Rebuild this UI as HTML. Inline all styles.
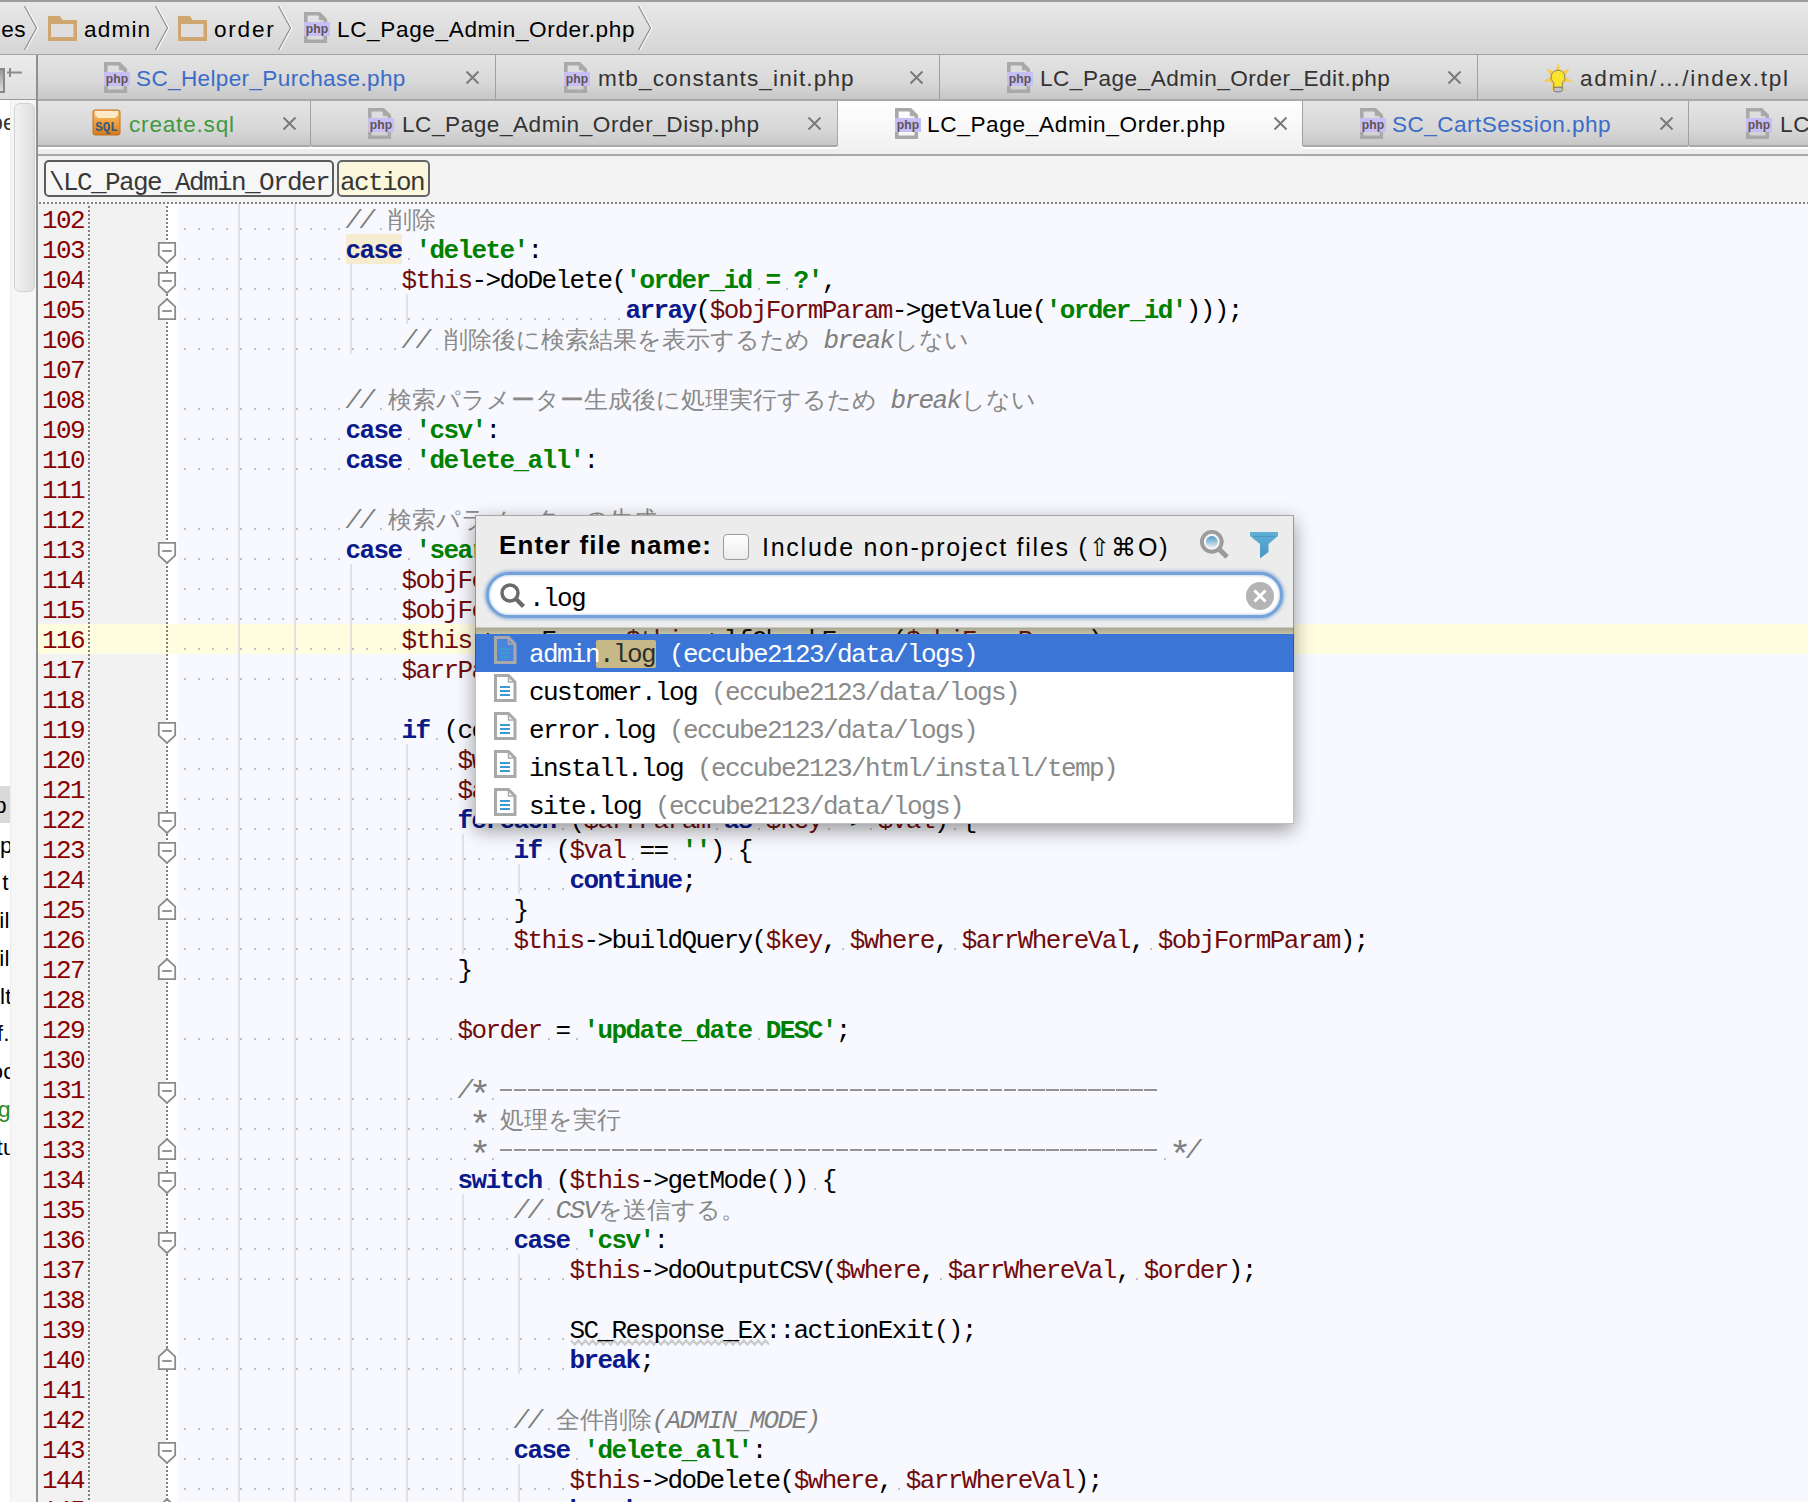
<!DOCTYPE html><html><head><meta charset="utf-8"><title>IDE</title><style>
html,body{margin:0;padding:0}
body{width:1808px;height:1502px;position:relative;overflow:hidden;background:#f8f9fe;font-family:"Liberation Sans",sans-serif}
.a{position:absolute}
.mono{font-family:"Liberation Mono",monospace}
.ln{position:absolute;left:0;height:30px;line-height:30px;margin-top:2px;white-space:pre;font-family:"Liberation Mono",monospace;font-size:26px;letter-spacing:-1.6px;color:#000}
.k{color:#0a1a8a;font-weight:bold}
.st{color:#008000;font-weight:bold}
.v{color:#720c0c}
.cm{color:#808080;font-style:italic}
.dash{color:transparent;background:repeating-linear-gradient(90deg,#939393 0 12.5px,transparent 12.5px 14px) 0 12.8px/100% 2.2px no-repeat}
.ast{display:inline-block;transform:translate(0px,6px) scale(1.45);font-style:normal}
.cj{color:#8a8a8a;font-size:23.5px;letter-spacing:0}
.num{position:absolute;left:42px;height:30px;line-height:30px;margin-top:2px;font-family:"Liberation Mono",monospace;font-size:26px;letter-spacing:-1.6px;color:#8b0000}
.ws{position:absolute;height:30px;background:linear-gradient(90deg,transparent 6px,#c2c2c2 6px,#c2c2c2 8px,transparent 8px) 0 24px/14px 2px repeat-x}
.guide{position:absolute;width:2px;background:#e2e2e2}
.tabtxt{position:absolute;font-size:22.6px;letter-spacing:0.35px;white-space:pre;margin-top:3.5px}
.tab{position:absolute;background:linear-gradient(#e6e6e6,#cdcdcd)}
</style></head><body>
<div class="a" style="left:37px;top:204px;width:129px;height:1298px;background:#f2f2f2"></div>
<div class="a" style="left:166px;top:204px;width:12px;height:1298px;background:#fff"></div>
<div class="a" style="left:37px;top:624px;width:1771px;height:30px;background:#fffde0"></div>
<div class="a" style="left:346px;top:234px;width:56px;height:30px;background:#f6ecd0"></div>
<div class="a" style="left:88px;top:204px;width:2px;height:1298px;background:linear-gradient(#808080 50%,transparent 50%) 0 2px/2px 4px repeat-y"></div>
<div class="a" style="left:166px;top:204px;width:2px;height:1298px;background:linear-gradient(#808080 50%,transparent 50%) 0 2px/2px 4px repeat-y"></div>
<div class="guide" style="left:238px;top:204px;height:1320px"></div>
<div class="guide" style="left:294px;top:204px;height:1320px"></div>
<div class="guide" style="left:350px;top:264px;height:90px"></div>
<div class="guide" style="left:350px;top:564px;height:960px"></div>
<div class="guide" style="left:406px;top:294px;height:30px"></div>
<div class="guide" style="left:406px;top:744px;height:780px"></div>
<div class="guide" style="left:462px;top:834px;height:120px"></div>
<div class="guide" style="left:462px;top:1194px;height:330px"></div>
<div class="guide" style="left:518px;top:864px;height:30px"></div>
<div class="guide" style="left:518px;top:1254px;height:120px"></div>
<div class="guide" style="left:518px;top:1464px;height:60px"></div>
<svg class="a" style="left:0;top:0" width="1808" height="1502"><polyline points="571.0,1340.5 574.6,1344.5 578.2,1340.5 581.8,1344.5 585.4,1340.5 589.0,1344.5 592.6,1340.5 596.2,1344.5 599.8,1340.5 603.4,1344.5 607.0,1340.5 610.6,1344.5 614.2,1340.5 617.8,1344.5 621.4,1340.5 625.0,1344.5 628.6,1340.5 632.2,1344.5 635.8,1340.5 639.4,1344.5 643.0,1340.5 646.6,1344.5 650.2,1340.5 653.8,1344.5 657.4,1340.5 661.0,1344.5 664.6,1340.5 668.2,1344.5 671.8,1340.5 675.4,1344.5 679.0,1340.5 682.6,1344.5 686.2,1340.5 689.8,1344.5 693.4,1340.5 697.0,1344.5 700.6,1340.5 704.2,1344.5 707.8,1340.5 711.4,1344.5 715.0,1340.5 718.6,1344.5 722.2,1340.5 725.8,1344.5 729.4,1340.5 733.0,1344.5 736.6,1340.5 740.2,1344.5 743.8,1340.5 747.4,1344.5 751.0,1340.5 754.6,1344.5 758.2,1340.5 761.8,1344.5 765.4,1340.5 769.0,1344.5" fill="none" stroke="#cacaca" stroke-width="2.2"/></svg>
<div class="num" style="top:204px">102</div>
<div class="ws" style="left:177.5px;top:204px;width:168px"></div>
<div class="ws" style="left:373.5px;top:204px;width:14px"></div>
<div class="ln" style="left:177.5px;top:204px">            <span class="cm">// </span><span class="cj">削除</span></div>
<div class="num" style="top:234px">103</div>
<div class="ws" style="left:177.5px;top:234px;width:168px"></div>
<div class="ws" style="left:401.5px;top:234px;width:14px"></div>
<div class="ln" style="left:177.5px;top:234px">            <span class="k">case</span> <span class="st">'delete'</span>:</div>
<div class="num" style="top:264px">104</div>
<div class="ws" style="left:177.5px;top:264px;width:224px"></div>
<div class="ws" style="left:751.5px;top:264px;width:14px"></div>
<div class="ws" style="left:779.5px;top:264px;width:14px"></div>
<div class="ln" style="left:177.5px;top:264px">                <span class="v">$this</span>-&gt;doDelete(<span class="st">'order_id = ?'</span>,</div>
<div class="num" style="top:294px">105</div>
<div class="ws" style="left:177.5px;top:294px;width:448px"></div>
<div class="ln" style="left:177.5px;top:294px">                                <span class="k">array</span>(<span class="v">$objFormParam</span>-&gt;getValue(<span class="st">'order_id'</span>)));</div>
<div class="num" style="top:324px">106</div>
<div class="ws" style="left:177.5px;top:324px;width:224px"></div>
<div class="ws" style="left:429.5px;top:324px;width:14px"></div>
<div class="ln" style="left:177.5px;top:324px">                <span class="cm">// </span><span class="cj">削除後に検索結果を表示するため</span><span class="cm"> break</span><span class="cj">しない</span></div>
<div class="num" style="top:354px">107</div>
<div class="num" style="top:384px">108</div>
<div class="ws" style="left:177.5px;top:384px;width:168px"></div>
<div class="ws" style="left:373.5px;top:384px;width:14px"></div>
<div class="ln" style="left:177.5px;top:384px">            <span class="cm">// </span><span class="cj">検索パラメーター生成後に処理実行するため</span><span class="cm"> break</span><span class="cj">しない</span></div>
<div class="num" style="top:414px">109</div>
<div class="ws" style="left:177.5px;top:414px;width:168px"></div>
<div class="ws" style="left:401.5px;top:414px;width:14px"></div>
<div class="ln" style="left:177.5px;top:414px">            <span class="k">case</span> <span class="st">'csv'</span>:</div>
<div class="num" style="top:444px">110</div>
<div class="ws" style="left:177.5px;top:444px;width:168px"></div>
<div class="ws" style="left:401.5px;top:444px;width:14px"></div>
<div class="ln" style="left:177.5px;top:444px">            <span class="k">case</span> <span class="st">'delete_all'</span>:</div>
<div class="num" style="top:474px">111</div>
<div class="num" style="top:504px">112</div>
<div class="ws" style="left:177.5px;top:504px;width:168px"></div>
<div class="ws" style="left:373.5px;top:504px;width:14px"></div>
<div class="ln" style="left:177.5px;top:504px">            <span class="cm">// </span><span class="cj">検索パラメーターの生成</span></div>
<div class="num" style="top:534px">113</div>
<div class="ws" style="left:177.5px;top:534px;width:168px"></div>
<div class="ws" style="left:401.5px;top:534px;width:14px"></div>
<div class="ln" style="left:177.5px;top:534px">            <span class="k">case</span> <span class="st">'search'</span>:</div>
<div class="num" style="top:564px">114</div>
<div class="ws" style="left:177.5px;top:564px;width:224px"></div>
<div class="ln" style="left:177.5px;top:564px">                <span class="v">$objFormParam</span>-&gt;convParam();</div>
<div class="num" style="top:594px">115</div>
<div class="ws" style="left:177.5px;top:594px;width:224px"></div>
<div class="ln" style="left:177.5px;top:594px">                <span class="v">$objFormParam</span>-&gt;trimParam();</div>
<div class="num" style="top:624px">116</div>
<div class="ws" style="left:177.5px;top:624px;width:224px"></div>
<div class="ws" style="left:583.5px;top:624px;width:14px"></div>
<div class="ws" style="left:611.5px;top:624px;width:14px"></div>
<div class="ln" style="left:177.5px;top:624px">                <span class="v">$this</span>-&gt;arrErr = <span class="v">$this</span>-&gt;lfCheckError(<span class="v">$objFormParam</span>);</div>
<div class="num" style="top:654px">117</div>
<div class="ws" style="left:177.5px;top:654px;width:224px"></div>
<div class="ws" style="left:527.5px;top:654px;width:14px"></div>
<div class="ws" style="left:555.5px;top:654px;width:14px"></div>
<div class="ln" style="left:177.5px;top:654px">                <span class="v">$arrParam</span> = <span class="v">$objFormParam</span>-&gt;getHashArray();</div>
<div class="num" style="top:684px">118</div>
<div class="num" style="top:714px">119</div>
<div class="ws" style="left:177.5px;top:714px;width:224px"></div>
<div class="ws" style="left:429.5px;top:714px;width:14px"></div>
<div class="ws" style="left:737.5px;top:714px;width:14px"></div>
<div class="ws" style="left:779.5px;top:714px;width:14px"></div>
<div class="ws" style="left:821.5px;top:714px;width:14px"></div>
<div class="ln" style="left:177.5px;top:714px">                <span class="k">if</span> (count(<span class="v">$this</span>-&gt;arrErr) == 0) {</div>
<div class="num" style="top:744px">120</div>
<div class="ws" style="left:177.5px;top:744px;width:280px"></div>
<div class="ws" style="left:541.5px;top:744px;width:14px"></div>
<div class="ws" style="left:569.5px;top:744px;width:14px"></div>
<div class="ws" style="left:695.5px;top:744px;width:14px"></div>
<div class="ws" style="left:723.5px;top:744px;width:14px"></div>
<div class="ln" style="left:177.5px;top:744px">                    <span class="v">$where</span> = <span class="st">'del_flg = 0'</span>;</div>
<div class="num" style="top:774px">121</div>
<div class="ws" style="left:177.5px;top:774px;width:280px"></div>
<div class="ws" style="left:625.5px;top:774px;width:14px"></div>
<div class="ws" style="left:653.5px;top:774px;width:14px"></div>
<div class="ln" style="left:177.5px;top:774px">                    <span class="v">$arrWhereVal</span> = <span class="k">array</span>();</div>
<div class="num" style="top:804px">122</div>
<div class="ws" style="left:177.5px;top:804px;width:280px"></div>
<div class="ws" style="left:555.5px;top:804px;width:14px"></div>
<div class="ws" style="left:709.5px;top:804px;width:14px"></div>
<div class="ws" style="left:751.5px;top:804px;width:14px"></div>
<div class="ws" style="left:821.5px;top:804px;width:14px"></div>
<div class="ws" style="left:863.5px;top:804px;width:14px"></div>
<div class="ws" style="left:947.5px;top:804px;width:14px"></div>
<div class="ln" style="left:177.5px;top:804px">                    <span class="k">foreach</span> (<span class="v">$arrParam</span> <span class="k">as</span> <span class="v">$key</span> =&gt; <span class="v">$val</span>) {</div>
<div class="num" style="top:834px">123</div>
<div class="ws" style="left:177.5px;top:834px;width:336px"></div>
<div class="ws" style="left:541.5px;top:834px;width:14px"></div>
<div class="ws" style="left:625.5px;top:834px;width:14px"></div>
<div class="ws" style="left:667.5px;top:834px;width:14px"></div>
<div class="ws" style="left:723.5px;top:834px;width:14px"></div>
<div class="ln" style="left:177.5px;top:834px">                        <span class="k">if</span> (<span class="v">$val</span> == <span class="st">''</span>) {</div>
<div class="num" style="top:864px">124</div>
<div class="ws" style="left:177.5px;top:864px;width:392px"></div>
<div class="ln" style="left:177.5px;top:864px">                            <span class="k">continue</span>;</div>
<div class="num" style="top:894px">125</div>
<div class="ws" style="left:177.5px;top:894px;width:336px"></div>
<div class="ln" style="left:177.5px;top:894px">                        }</div>
<div class="num" style="top:924px">126</div>
<div class="ws" style="left:177.5px;top:924px;width:336px"></div>
<div class="ws" style="left:835.5px;top:924px;width:14px"></div>
<div class="ws" style="left:947.5px;top:924px;width:14px"></div>
<div class="ws" style="left:1143.5px;top:924px;width:14px"></div>
<div class="ln" style="left:177.5px;top:924px">                        <span class="v">$this</span>-&gt;buildQuery(<span class="v">$key</span>, <span class="v">$where</span>, <span class="v">$arrWhereVal</span>, <span class="v">$objFormParam</span>);</div>
<div class="num" style="top:954px">127</div>
<div class="ws" style="left:177.5px;top:954px;width:280px"></div>
<div class="ln" style="left:177.5px;top:954px">                    }</div>
<div class="num" style="top:984px">128</div>
<div class="num" style="top:1014px">129</div>
<div class="ws" style="left:177.5px;top:1014px;width:280px"></div>
<div class="ws" style="left:541.5px;top:1014px;width:14px"></div>
<div class="ws" style="left:569.5px;top:1014px;width:14px"></div>
<div class="ws" style="left:751.5px;top:1014px;width:14px"></div>
<div class="ln" style="left:177.5px;top:1014px">                    <span class="v">$order</span> = <span class="st">'update_date DESC'</span>;</div>
<div class="num" style="top:1044px">130</div>
<div class="num" style="top:1074px">131</div>
<div class="ws" style="left:177.5px;top:1074px;width:280px"></div>
<div class="ws" style="left:485.5px;top:1074px;width:14px"></div>
<div class="ln" style="left:177.5px;top:1074px">                    <span class="cm">/<span class="ast">*</span> <span class="dash">-----------------------------------------------</span></span></div>
<div class="num" style="top:1104px">132</div>
<div class="ws" style="left:177.5px;top:1104px;width:294px"></div>
<div class="ws" style="left:485.5px;top:1104px;width:14px"></div>
<div class="ln" style="left:177.5px;top:1104px">                    <span class="cm"> <span class="ast">*</span> </span><span class="cj">処理を実行</span></div>
<div class="num" style="top:1134px">133</div>
<div class="ws" style="left:177.5px;top:1134px;width:294px"></div>
<div class="ws" style="left:485.5px;top:1134px;width:14px"></div>
<div class="ws" style="left:1157.5px;top:1134px;width:14px"></div>
<div class="ln" style="left:177.5px;top:1134px">                    <span class="cm"> <span class="ast">*</span> <span class="dash">-----------------------------------------------</span> <span class="ast">*</span>/</span></div>
<div class="num" style="top:1164px">134</div>
<div class="ws" style="left:177.5px;top:1164px;width:280px"></div>
<div class="ws" style="left:541.5px;top:1164px;width:14px"></div>
<div class="ws" style="left:807.5px;top:1164px;width:14px"></div>
<div class="ln" style="left:177.5px;top:1164px">                    <span class="k">switch</span> (<span class="v">$this</span>-&gt;getMode()) {</div>
<div class="num" style="top:1194px">135</div>
<div class="ws" style="left:177.5px;top:1194px;width:336px"></div>
<div class="ws" style="left:541.5px;top:1194px;width:14px"></div>
<div class="ln" style="left:177.5px;top:1194px">                        <span class="cm">// CSV</span><span class="cj">を送信する。</span></div>
<div class="num" style="top:1224px">136</div>
<div class="ws" style="left:177.5px;top:1224px;width:336px"></div>
<div class="ws" style="left:569.5px;top:1224px;width:14px"></div>
<div class="ln" style="left:177.5px;top:1224px">                        <span class="k">case</span> <span class="st">'csv'</span>:</div>
<div class="num" style="top:1254px">137</div>
<div class="ws" style="left:177.5px;top:1254px;width:392px"></div>
<div class="ws" style="left:933.5px;top:1254px;width:14px"></div>
<div class="ws" style="left:1129.5px;top:1254px;width:14px"></div>
<div class="ln" style="left:177.5px;top:1254px">                            <span class="v">$this</span>-&gt;doOutputCSV(<span class="v">$where</span>, <span class="v">$arrWhereVal</span>, <span class="v">$order</span>);</div>
<div class="num" style="top:1284px">138</div>
<div class="num" style="top:1314px">139</div>
<div class="ws" style="left:177.5px;top:1314px;width:392px"></div>
<div class="ln" style="left:177.5px;top:1314px">                            SC_Response_Ex::actionExit();</div>
<div class="num" style="top:1344px">140</div>
<div class="ws" style="left:177.5px;top:1344px;width:392px"></div>
<div class="ln" style="left:177.5px;top:1344px">                            <span class="k">break</span>;</div>
<div class="num" style="top:1374px">141</div>
<div class="num" style="top:1404px">142</div>
<div class="ws" style="left:177.5px;top:1404px;width:336px"></div>
<div class="ws" style="left:541.5px;top:1404px;width:14px"></div>
<div class="ln" style="left:177.5px;top:1404px">                        <span class="cm">// </span><span class="cj">全件削除</span><span class="cm">(ADMIN_MODE)</span></div>
<div class="num" style="top:1434px">143</div>
<div class="ws" style="left:177.5px;top:1434px;width:336px"></div>
<div class="ws" style="left:569.5px;top:1434px;width:14px"></div>
<div class="ln" style="left:177.5px;top:1434px">                        <span class="k">case</span> <span class="st">'delete_all'</span>:</div>
<div class="num" style="top:1464px">144</div>
<div class="ws" style="left:177.5px;top:1464px;width:392px"></div>
<div class="ws" style="left:891.5px;top:1464px;width:14px"></div>
<div class="ln" style="left:177.5px;top:1464px">                            <span class="v">$this</span>-&gt;doDelete(<span class="v">$where</span>, <span class="v">$arrWhereVal</span>);</div>
<div class="num" style="top:1494px">145</div>
<div class="ws" style="left:177.5px;top:1494px;width:392px"></div>
<div class="ln" style="left:177.5px;top:1494px">                            <span class="k">break</span>;</div>
<div class="a" style="left:0;top:0;width:1808px;height:54px;background:linear-gradient(#e9e9e9,#d5d5d5)"></div>
<div class="a" style="left:0;top:0;width:1808px;height:2px;background:#9d9d9d"></div>
<div class="a" style="left:0;top:54px;width:1808px;height:1px;background:#a3a3a3"></div>
<div class="a tabtxt" style="left:-16px;top:13px;color:#000">files</div>
<svg class="a" style="left:23px;top:4px" width="16" height="48" viewBox="0 0 16 48"><path d="M1.5 2L13.5 24L1.5 46" fill="none" stroke="#fbfbfb" stroke-width="1.5" transform="translate(1.2,0)"/><path d="M1.5 2L13.5 24L1.5 46" fill="none" stroke="#8f8f8f" stroke-width="1.2"/></svg>
<svg class="a" style="left:48px;top:16px" width="29" height="25" viewBox="0 0 29 25"><path d="M0 0h12l2.5 4h14.5v21h-29z" fill="#cfa670"/><rect x="3" y="8" width="22.5" height="13" fill="#dedede"/></svg>
<div class="a tabtxt" style="left:84px;top:13px;color:#000;letter-spacing:1.15px">admin</div>
<svg class="a" style="left:154px;top:4px" width="16" height="48" viewBox="0 0 16 48"><path d="M1.5 2L13.5 24L1.5 46" fill="none" stroke="#fbfbfb" stroke-width="1.5" transform="translate(1.2,0)"/><path d="M1.5 2L13.5 24L1.5 46" fill="none" stroke="#8f8f8f" stroke-width="1.2"/></svg>
<svg class="a" style="left:178px;top:16px" width="29" height="25" viewBox="0 0 29 25"><path d="M0 0h12l2.5 4h14.5v21h-29z" fill="#cfa670"/><rect x="3" y="8" width="22.5" height="13" fill="#dedede"/></svg>
<div class="a tabtxt" style="left:214px;top:13px;color:#000;letter-spacing:1.75px">order</div>
<svg class="a" style="left:277px;top:4px" width="16" height="48" viewBox="0 0 16 48"><path d="M1.5 2L13.5 24L1.5 46" fill="none" stroke="#fbfbfb" stroke-width="1.5" transform="translate(1.2,0)"/><path d="M1.5 2L13.5 24L1.5 46" fill="none" stroke="#8f8f8f" stroke-width="1.2"/></svg>
<svg class="a" style="left:304px;top:12px" width="27" height="31" viewBox="0 0 27 31"><path d="M1.8 1.8h13.5l6 6v21.5h-19.5z" fill="none" stroke="#a9a9a9" stroke-width="3.6"/><path d="M15.3 1.8v6h6" fill="#a9a9a9" stroke="#a9a9a9" stroke-width="1"/><rect x="0" y="10" width="26" height="14" fill="#c6bef5"/><text x="13" y="21.5" text-anchor="middle" font-family="Liberation Sans" font-weight="bold" font-size="13.5" fill="#5f5454" transform="translate(13 0) scale(0.9 1) translate(-13 0)">php</text></svg>
<div class="a tabtxt" style="left:337px;top:13px;color:#000;letter-spacing:0.62px">LC_Page_Admin_Order.php</div>
<svg class="a" style="left:637px;top:4px" width="16" height="48" viewBox="0 0 16 48"><path d="M1.5 2L13.5 24L1.5 46" fill="none" stroke="#fbfbfb" stroke-width="1.5" transform="translate(1.2,0)"/><path d="M1.5 2L13.5 24L1.5 46" fill="none" stroke="#8f8f8f" stroke-width="1.2"/></svg>
<div class="a" style="left:0;top:55px;width:36px;height:44px;background:linear-gradient(#ececec,#dedede)"></div>
<div class="a" style="left:0;top:99px;width:36px;height:1px;background:#9a9a9a"></div>
<div class="a" style="left:-6px;top:68px;width:7px;height:21px;border:2px solid #888;background:linear-gradient(#999,#ddd)"></div>
<svg class="a" style="left:5px;top:67px" width="18" height="14" viewBox="0 0 18 14"><path d="M2 5.5h15M5 1v9" stroke="#8a8a8a" stroke-width="2"/></svg>
<div class="a" style="left:37px;top:55px;width:1771px;height:46px;background:#c8c8c8"></div>
<div class="a" style="left:37px;top:55px;width:458px;height:45px;background:linear-gradient(#e4e4e4 0%,#d8d8d8 60%,#c6c6c6 100%)"></div>
<div class="a" style="left:37px;top:99px;width:458px;height:2px;background:#a9a9a9"></div>
<svg class="a" style="left:104px;top:62px" width="27" height="31" viewBox="0 0 27 31"><path d="M1.8 1.8h13.5l6 6v21.5h-19.5z" fill="none" stroke="#a9a9a9" stroke-width="3.6"/><path d="M15.3 1.8v6h6" fill="#a9a9a9" stroke="#a9a9a9" stroke-width="1"/><rect x="0" y="10" width="26" height="14" fill="#c6bef5"/><text x="13" y="21.5" text-anchor="middle" font-family="Liberation Sans" font-weight="bold" font-size="13.5" fill="#5f5454" transform="translate(13 0) scale(0.9 1) translate(-13 0)">php</text></svg>
<div class="a tabtxt" style="left:136px;top:62px;color:#3a6cc8;letter-spacing:0.33px;">SC_Helper_Purchase.php</div>
<svg class="a" style="left:465px;top:70px" width="15" height="15" viewBox="0 0 15 15"><path d="M1.5 1.5L13.5 13.5M13.5 1.5L1.5 13.5" stroke="#7a7a7a" stroke-width="2"/></svg>
<div class="a" style="left:496px;top:55px;width:443px;height:45px;background:linear-gradient(#e4e4e4 0%,#d8d8d8 60%,#c6c6c6 100%)"></div>
<div class="a" style="left:496px;top:99px;width:443px;height:2px;background:#a9a9a9"></div>
<svg class="a" style="left:564px;top:62px" width="27" height="31" viewBox="0 0 27 31"><path d="M1.8 1.8h13.5l6 6v21.5h-19.5z" fill="none" stroke="#a9a9a9" stroke-width="3.6"/><path d="M15.3 1.8v6h6" fill="#a9a9a9" stroke="#a9a9a9" stroke-width="1"/><rect x="0" y="10" width="26" height="14" fill="#c6bef5"/><text x="13" y="21.5" text-anchor="middle" font-family="Liberation Sans" font-weight="bold" font-size="13.5" fill="#5f5454" transform="translate(13 0) scale(0.9 1) translate(-13 0)">php</text></svg>
<div class="a tabtxt" style="left:598px;top:62px;color:#333;letter-spacing:1.11px;">mtb_constants_init.php</div>
<svg class="a" style="left:909px;top:70px" width="15" height="15" viewBox="0 0 15 15"><path d="M1.5 1.5L13.5 13.5M13.5 1.5L1.5 13.5" stroke="#7a7a7a" stroke-width="2"/></svg>
<div class="a" style="left:940px;top:55px;width:537px;height:45px;background:linear-gradient(#e4e4e4 0%,#d8d8d8 60%,#c6c6c6 100%)"></div>
<div class="a" style="left:940px;top:99px;width:537px;height:2px;background:#a9a9a9"></div>
<svg class="a" style="left:1007px;top:62px" width="27" height="31" viewBox="0 0 27 31"><path d="M1.8 1.8h13.5l6 6v21.5h-19.5z" fill="none" stroke="#a9a9a9" stroke-width="3.6"/><path d="M15.3 1.8v6h6" fill="#a9a9a9" stroke="#a9a9a9" stroke-width="1"/><rect x="0" y="10" width="26" height="14" fill="#c6bef5"/><text x="13" y="21.5" text-anchor="middle" font-family="Liberation Sans" font-weight="bold" font-size="13.5" fill="#5f5454" transform="translate(13 0) scale(0.9 1) translate(-13 0)">php</text></svg>
<div class="a tabtxt" style="left:1040px;top:62px;color:#333;letter-spacing:0.49px;">LC_Page_Admin_Order_Edit.php</div>
<svg class="a" style="left:1447px;top:70px" width="15" height="15" viewBox="0 0 15 15"><path d="M1.5 1.5L13.5 13.5M13.5 1.5L1.5 13.5" stroke="#7a7a7a" stroke-width="2"/></svg>
<div class="a" style="left:1478px;top:55px;width:330px;height:45px;background:linear-gradient(#e4e4e4 0%,#d8d8d8 60%,#c6c6c6 100%)"></div>
<div class="a" style="left:1478px;top:99px;width:330px;height:2px;background:#a9a9a9"></div>
<svg class="a" style="left:1543px;top:62px" width="30" height="32" viewBox="0 0 30 32"><polygon points="15.0,1.0 18.1,9.5 26.7,6.6 22.0,14.4 29.6,19.3 20.6,20.5 21.5,29.5 15.0,23.2 8.5,29.5 9.4,20.5 0.4,19.3 8.0,14.4 3.3,6.6 11.9,9.5" fill="#f7cd55"/><path d="M15 8.3a7 7 0 0 1 4.2 12.6v4.6h-8.4v-4.6a7 7 0 0 1 4.2-12.6z" fill="#fbe52c" stroke="#7a7a7a" stroke-width="0.9"/><path d="M10.8 25.2h8.4v2.6a2 2 0 0 1-2 2h-4.4a2 2 0 0 1-2-2z" fill="#c4c4c4" stroke="#6d6d6d" stroke-width="0.9"/></svg>
<div class="a tabtxt" style="left:1580px;top:62px;color:#333;letter-spacing:1.70px;">admin/…/index.tpl</div>
<div class="a" style="left:495px;top:55px;width:1px;height:45px;background:#a0a0a0"></div>
<div class="a" style="left:939px;top:55px;width:1px;height:45px;background:#a0a0a0"></div>
<div class="a" style="left:1477px;top:55px;width:1px;height:45px;background:#a0a0a0"></div>
<div class="a" style="left:37px;top:100px;width:1771px;height:1px;background:#a9a9a9"></div>
<div class="a" style="left:37px;top:101px;width:273px;height:45px;background:linear-gradient(#e4e4e4 0%,#d8d8d8 60%,#c6c6c6 100%)"></div>
<div class="a" style="left:37px;top:145px;width:273px;height:2px;background:#a9a9a9"></div>
<svg class="a" style="left:92px;top:108px" width="29" height="29" viewBox="0 0 29 29"><defs><linearGradient id="sg" x1="0" y1="0" x2="0" y2="1"><stop offset="0" stop-color="#f8c070"/><stop offset="0.5" stop-color="#f0a040"/><stop offset="1" stop-color="#d27a20"/></linearGradient></defs><rect x="1" y="2" width="27" height="25" rx="2" fill="url(#sg)" stroke="#c07020" stroke-width="1"/><path d="M3 3h23v4l-3 3h-17l-3-3z" fill="#fde9c6"/><text x="14.5" y="23" text-anchor="middle" font-family="Liberation Mono" font-weight="bold" font-size="12.5" fill="#365a7a">SQL</text></svg>
<div class="a tabtxt" style="left:129px;top:108px;color:#3f9a3f;letter-spacing:0.79px;">create.sql</div>
<svg class="a" style="left:282px;top:116px" width="15" height="15" viewBox="0 0 15 15"><path d="M1.5 1.5L13.5 13.5M13.5 1.5L1.5 13.5" stroke="#7a7a7a" stroke-width="2"/></svg>
<div class="a" style="left:311px;top:101px;width:526px;height:45px;background:linear-gradient(#e4e4e4 0%,#d8d8d8 60%,#c6c6c6 100%)"></div>
<div class="a" style="left:311px;top:145px;width:526px;height:2px;background:#a9a9a9"></div>
<svg class="a" style="left:368px;top:108px" width="27" height="31" viewBox="0 0 27 31"><path d="M1.8 1.8h13.5l6 6v21.5h-19.5z" fill="none" stroke="#a9a9a9" stroke-width="3.6"/><path d="M15.3 1.8v6h6" fill="#a9a9a9" stroke="#a9a9a9" stroke-width="1"/><rect x="0" y="10" width="26" height="14" fill="#c6bef5"/><text x="13" y="21.5" text-anchor="middle" font-family="Liberation Sans" font-weight="bold" font-size="13.5" fill="#5f5454" transform="translate(13 0) scale(0.9 1) translate(-13 0)">php</text></svg>
<div class="a tabtxt" style="left:402px;top:108px;color:#333;letter-spacing:0.53px;">LC_Page_Admin_Order_Disp.php</div>
<svg class="a" style="left:807px;top:116px" width="15" height="15" viewBox="0 0 15 15"><path d="M1.5 1.5L13.5 13.5M13.5 1.5L1.5 13.5" stroke="#7a7a7a" stroke-width="2"/></svg>
<div class="a" style="left:838px;top:101px;width:464px;height:53px;background:linear-gradient(#ffffff,#f6f6f6 60%,#efefef)"></div>
<svg class="a" style="left:895px;top:108px" width="27" height="31" viewBox="0 0 27 31"><path d="M1.8 1.8h13.5l6 6v21.5h-19.5z" fill="none" stroke="#a9a9a9" stroke-width="3.6"/><path d="M15.3 1.8v6h6" fill="#a9a9a9" stroke="#a9a9a9" stroke-width="1"/><rect x="0" y="10" width="26" height="14" fill="#c6bef5"/><text x="13" y="21.5" text-anchor="middle" font-family="Liberation Sans" font-weight="bold" font-size="13.5" fill="#5f5454" transform="translate(13 0) scale(0.9 1) translate(-13 0)">php</text></svg>
<div class="a tabtxt" style="left:927px;top:108px;color:#000;letter-spacing:0.65px;">LC_Page_Admin_Order.php</div>
<svg class="a" style="left:1273px;top:116px" width="15" height="15" viewBox="0 0 15 15"><path d="M1.5 1.5L13.5 13.5M13.5 1.5L1.5 13.5" stroke="#7a7a7a" stroke-width="2"/></svg>
<div class="a" style="left:1303px;top:101px;width:385px;height:45px;background:linear-gradient(#e4e4e4 0%,#d8d8d8 60%,#c6c6c6 100%)"></div>
<div class="a" style="left:1303px;top:145px;width:385px;height:2px;background:#a9a9a9"></div>
<svg class="a" style="left:1360px;top:108px" width="27" height="31" viewBox="0 0 27 31"><path d="M1.8 1.8h13.5l6 6v21.5h-19.5z" fill="none" stroke="#a9a9a9" stroke-width="3.6"/><path d="M15.3 1.8v6h6" fill="#a9a9a9" stroke="#a9a9a9" stroke-width="1"/><rect x="0" y="10" width="26" height="14" fill="#c6bef5"/><text x="13" y="21.5" text-anchor="middle" font-family="Liberation Sans" font-weight="bold" font-size="13.5" fill="#5f5454" transform="translate(13 0) scale(0.9 1) translate(-13 0)">php</text></svg>
<div class="a tabtxt" style="left:1392px;top:108px;color:#3a6cc8;letter-spacing:0.45px;">SC_CartSession.php</div>
<svg class="a" style="left:1659px;top:116px" width="15" height="15" viewBox="0 0 15 15"><path d="M1.5 1.5L13.5 13.5M13.5 1.5L1.5 13.5" stroke="#7a7a7a" stroke-width="2"/></svg>
<div class="a" style="left:1689px;top:101px;width:119px;height:45px;background:linear-gradient(#e4e4e4 0%,#d8d8d8 60%,#c6c6c6 100%)"></div>
<div class="a" style="left:1689px;top:145px;width:119px;height:2px;background:#a9a9a9"></div>
<svg class="a" style="left:1746px;top:108px" width="27" height="31" viewBox="0 0 27 31"><path d="M1.8 1.8h13.5l6 6v21.5h-19.5z" fill="none" stroke="#a9a9a9" stroke-width="3.6"/><path d="M15.3 1.8v6h6" fill="#a9a9a9" stroke="#a9a9a9" stroke-width="1"/><rect x="0" y="10" width="26" height="14" fill="#c6bef5"/><text x="13" y="21.5" text-anchor="middle" font-family="Liberation Sans" font-weight="bold" font-size="13.5" fill="#5f5454" transform="translate(13 0) scale(0.9 1) translate(-13 0)">php</text></svg>
<div class="a tabtxt" style="left:1780px;top:108px;color:#333;letter-spacing:0.65px;">LC_Page_Admin_Order.php</div>
<div class="a" style="left:310px;top:101px;width:1px;height:45px;background:#a0a0a0"></div>
<div class="a" style="left:1302px;top:101px;width:1px;height:45px;background:#a0a0a0"></div>
<div class="a" style="left:1688px;top:101px;width:1px;height:45px;background:#a0a0a0"></div>
<div class="a" style="left:837px;top:101px;width:1px;height:45px;background:#a8a8a8"></div>
<div class="a" style="left:37px;top:147px;width:801px;height:7px;background:linear-gradient(#fff 0,#fff 2px,#eeeeee 2px)"></div>
<div class="a" style="left:1302px;top:147px;width:506px;height:7px;background:linear-gradient(#fff 0,#fff 2px,#eeeeee 2px)"></div>
<div class="a" style="left:37px;top:154px;width:1771px;height:2px;background:#a8a8a8"></div>
<div class="a" style="left:37px;top:156px;width:1771px;height:48px;background:#f3f3f3"></div>
<div class="a" style="left:37px;top:202px;width:1771px;height:2px;background:linear-gradient(90deg,#858585 50%,transparent 50%) 2px 0/4px 2px repeat-x"></div>
<div class="a mono" style="left:44px;top:160px;width:286px;height:33px;border:2px solid #5c5c5c;border-radius:5px;background:#f6f6f6"></div>
<div class="a mono" style="left:337px;top:160px;width:89px;height:33px;border:2px solid #666;border-radius:5px;background:#fbf7dc"></div>
<div class="a mono" style="left:49px;top:168px;font-size:26px;letter-spacing:-1.6px;line-height:30px;color:#383838;white-space:pre">\LC_Page_Admin_Order</div>
<div class="a mono" style="left:340px;top:168px;font-size:26px;letter-spacing:-1.6px;line-height:30px;color:#383838;white-space:pre">action</div>
<div class="a" style="left:0;top:100px;width:36px;height:1402px;background:#fff"></div>
<div class="a" style="left:10px;top:100px;width:26px;height:1402px;background:#f6f6f6;border-left:1px solid #ededed"></div>
<div class="a" style="left:14px;top:103px;width:19px;height:187px;border:1px solid #d2d2d2;border-radius:6px;background:linear-gradient(90deg,#f2f2f2,#dedede)"></div>
<div class="a" style="left:36px;top:55px;width:2px;height:1447px;background:#8f8f8f"></div>
<div class="a" style="left:0;top:786px;width:10px;height:37px;background:#d9d9d9"></div>
<div class="a" style="left:0;top:100px;width:10px;height:1402px;overflow:hidden">
<div class="a tabtxt" style="right:-6px;top:6px;color:#333">pe</div>
<div class="a tabtxt" style="right:3px;top:689px;color:#000">p</div>
<div class="a tabtxt" style="right:-3px;top:729px;color:#000">p</div>
<div class="a tabtxt" style="right:1px;top:766px;color:#000">t</div>
<div class="a tabtxt" style="right:0px;top:804px;color:#000">il</div>
<div class="a tabtxt" style="right:0px;top:842px;color:#000">il</div>
<div class="a tabtxt" style="right:-2px;top:880px;color:#000">lt</div>
<div class="a tabtxt" style="right:0px;top:917px;color:#000">f.</div>
<div class="a tabtxt" style="right:-5px;top:955px;color:#000">oc</div>
<div class="a tabtxt" style="right:-1px;top:993px;color:#2a8a2a">g</div>
<div class="a tabtxt" style="right:-6px;top:1031px;color:#000">tu</div>
</div>
<svg class="a" style="left:157px;top:241px" width="20" height="24" viewBox="0 0 20 24"><path d="M1.8 1.8h16.4v12.6l-8.2 7.6l-8.2-7.6z" fill="#fff" stroke="#8a8a8a" stroke-width="1.8"/><path d="M5.2 10h9.6" stroke="#8a8a8a" stroke-width="1.8"/></svg>
<svg class="a" style="left:157px;top:271px" width="20" height="24" viewBox="0 0 20 24"><path d="M1.8 1.8h16.4v12.6l-8.2 7.6l-8.2-7.6z" fill="#fff" stroke="#8a8a8a" stroke-width="1.8"/><path d="M5.2 10h9.6" stroke="#8a8a8a" stroke-width="1.8"/></svg>
<svg class="a" style="left:157px;top:541px" width="20" height="24" viewBox="0 0 20 24"><path d="M1.8 1.8h16.4v12.6l-8.2 7.6l-8.2-7.6z" fill="#fff" stroke="#8a8a8a" stroke-width="1.8"/><path d="M5.2 10h9.6" stroke="#8a8a8a" stroke-width="1.8"/></svg>
<svg class="a" style="left:157px;top:721px" width="20" height="24" viewBox="0 0 20 24"><path d="M1.8 1.8h16.4v12.6l-8.2 7.6l-8.2-7.6z" fill="#fff" stroke="#8a8a8a" stroke-width="1.8"/><path d="M5.2 10h9.6" stroke="#8a8a8a" stroke-width="1.8"/></svg>
<svg class="a" style="left:157px;top:811px" width="20" height="24" viewBox="0 0 20 24"><path d="M1.8 1.8h16.4v12.6l-8.2 7.6l-8.2-7.6z" fill="#fff" stroke="#8a8a8a" stroke-width="1.8"/><path d="M5.2 10h9.6" stroke="#8a8a8a" stroke-width="1.8"/></svg>
<svg class="a" style="left:157px;top:841px" width="20" height="24" viewBox="0 0 20 24"><path d="M1.8 1.8h16.4v12.6l-8.2 7.6l-8.2-7.6z" fill="#fff" stroke="#8a8a8a" stroke-width="1.8"/><path d="M5.2 10h9.6" stroke="#8a8a8a" stroke-width="1.8"/></svg>
<svg class="a" style="left:157px;top:1081px" width="20" height="24" viewBox="0 0 20 24"><path d="M1.8 1.8h16.4v12.6l-8.2 7.6l-8.2-7.6z" fill="#fff" stroke="#8a8a8a" stroke-width="1.8"/><path d="M5.2 10h9.6" stroke="#8a8a8a" stroke-width="1.8"/></svg>
<svg class="a" style="left:157px;top:1171px" width="20" height="24" viewBox="0 0 20 24"><path d="M1.8 1.8h16.4v12.6l-8.2 7.6l-8.2-7.6z" fill="#fff" stroke="#8a8a8a" stroke-width="1.8"/><path d="M5.2 10h9.6" stroke="#8a8a8a" stroke-width="1.8"/></svg>
<svg class="a" style="left:157px;top:1231px" width="20" height="24" viewBox="0 0 20 24"><path d="M1.8 1.8h16.4v12.6l-8.2 7.6l-8.2-7.6z" fill="#fff" stroke="#8a8a8a" stroke-width="1.8"/><path d="M5.2 10h9.6" stroke="#8a8a8a" stroke-width="1.8"/></svg>
<svg class="a" style="left:157px;top:1441px" width="20" height="24" viewBox="0 0 20 24"><path d="M1.8 1.8h16.4v12.6l-8.2 7.6l-8.2-7.6z" fill="#fff" stroke="#8a8a8a" stroke-width="1.8"/><path d="M5.2 10h9.6" stroke="#8a8a8a" stroke-width="1.8"/></svg>
<svg class="a" style="left:157px;top:297px" width="20" height="24" viewBox="0 0 20 24"><path d="M1.8 22.2h16.4v-12.6l-8.2-7.6l-8.2 7.6z" fill="#fff" stroke="#8a8a8a" stroke-width="1.8"/><path d="M5.2 14h9.6" stroke="#8a8a8a" stroke-width="1.8"/></svg>
<svg class="a" style="left:157px;top:897px" width="20" height="24" viewBox="0 0 20 24"><path d="M1.8 22.2h16.4v-12.6l-8.2-7.6l-8.2 7.6z" fill="#fff" stroke="#8a8a8a" stroke-width="1.8"/><path d="M5.2 14h9.6" stroke="#8a8a8a" stroke-width="1.8"/></svg>
<svg class="a" style="left:157px;top:957px" width="20" height="24" viewBox="0 0 20 24"><path d="M1.8 22.2h16.4v-12.6l-8.2-7.6l-8.2 7.6z" fill="#fff" stroke="#8a8a8a" stroke-width="1.8"/><path d="M5.2 14h9.6" stroke="#8a8a8a" stroke-width="1.8"/></svg>
<svg class="a" style="left:157px;top:1137px" width="20" height="24" viewBox="0 0 20 24"><path d="M1.8 22.2h16.4v-12.6l-8.2-7.6l-8.2 7.6z" fill="#fff" stroke="#8a8a8a" stroke-width="1.8"/><path d="M5.2 14h9.6" stroke="#8a8a8a" stroke-width="1.8"/></svg>
<svg class="a" style="left:157px;top:1347px" width="20" height="24" viewBox="0 0 20 24"><path d="M1.8 22.2h16.4v-12.6l-8.2-7.6l-8.2 7.6z" fill="#fff" stroke="#8a8a8a" stroke-width="1.8"/><path d="M5.2 14h9.6" stroke="#8a8a8a" stroke-width="1.8"/></svg>
<svg class="a" style="left:157px;top:1497px" width="20" height="24" viewBox="0 0 20 24"><path d="M1.8 22.2h16.4v-12.6l-8.2-7.6l-8.2 7.6z" fill="#fff" stroke="#8a8a8a" stroke-width="1.8"/><path d="M5.2 14h9.6" stroke="#8a8a8a" stroke-width="1.8"/></svg>
<div class="a" style="left:475px;top:515px;width:819px;height:309px;box-shadow:0 6px 18px rgba(0,0,0,0.4)"></div>
<div class="a" style="left:475px;top:515px;width:819px;height:113px;background:#ececec;border:1px solid #c9c9c9;box-sizing:border-box"></div>
<div class="a" style="left:475px;top:628px;width:819px;height:6px;background:linear-gradient(rgba(40,40,20,0.40),rgba(40,40,20,0.28))"></div>
<div class="a" style="left:475px;top:634px;width:819px;height:190px;background:#fff"></div>
<div class="a" style="left:475px;top:634px;width:819px;height:38px;background:#3b76d6"></div>
<div class="a" style="left:499px;top:530px;font-size:26px;font-weight:bold;letter-spacing:1.13px;color:#000;white-space:pre">Enter file name:</div>
<div class="a" style="left:723px;top:534px;width:24px;height:24px;border:1px solid #9b9b9b;border-radius:4px;background:linear-gradient(#ffffff,#ececec)"></div>
<div class="a" style="left:762px;top:533px;font-size:25px;letter-spacing:1.75px;color:#000;white-space:pre">Include non-project files (⇧⌘O)</div>
<svg class="a" style="left:1199px;top:529px" width="33" height="33" viewBox="0 0 33 33"><defs><linearGradient id="lg" x1="0" y1="0" x2="0" y2="1"><stop offset="0" stop-color="#4a98c8"/><stop offset="1" stop-color="#e8eef3"/></linearGradient></defs><path d="M19 19L28 28" stroke="#9a9a9a" stroke-width="5.2"/><circle cx="12.8" cy="12.8" r="9.9" fill="#f4f4f4" stroke="#9c9c9c" stroke-width="3.9"/><circle cx="12.8" cy="12.8" r="5.9" fill="url(#lg)"/></svg>
<svg class="a" style="left:1249px;top:531px" width="30" height="29" viewBox="0 0 30 29"><defs><linearGradient id="fg" x1="0" y1="0" x2="0" y2="1"><stop offset="0" stop-color="#62b0d6"/><stop offset="1" stop-color="#4696c4"/></linearGradient></defs><path d="M1 1H29V5L19.5 13V21L11.5 27H11V13L1 5Z" fill="url(#fg)"/><path d="M4 5.5H26" stroke="#4e98c2" stroke-width="1.2"/></svg>
<div class="a" style="left:486px;top:572px;width:797px;height:46px;box-sizing:border-box;border-radius:23px;background:#fff;border:3px solid #73a3d8;box-shadow:0 0 3px 1.5px rgba(90,140,210,0.55), inset 0 0 3px rgba(80,130,200,0.6)"></div>
<svg class="a" style="left:499px;top:582px" width="28" height="28" viewBox="0 0 28 28"><circle cx="11" cy="11" r="8" fill="none" stroke="#6a6a6a" stroke-width="3.5"/><path d="M16.5 16.5L24.5 24.5" stroke="#6a6a6a" stroke-width="4.5"/></svg>
<div class="a mono" style="left:529px;top:584px;font-size:26px;letter-spacing:-1.6px;line-height:30px;color:#000;white-space:pre">.log</div>
<svg class="a" style="left:1245px;top:581px" width="30" height="30" viewBox="0 0 30 30"><circle cx="15" cy="15" r="14" fill="#b4b4b4"/><path d="M9.5 9.5L20.5 20.5M20.5 9.5L9.5 20.5" stroke="#fff" stroke-width="3"/></svg>
<svg class="a" style="left:494px;top:636px" width="23" height="28" viewBox="0 0 23 28"><path d="M1.5 1.5h13l6.5 6.5v18.5h-19.5z" fill="#4a84dc" stroke="#a9a9a9" stroke-width="3"/><path d="M14.5 1.5v6.5h6.5" fill="none" stroke="#a9a9a9" stroke-width="1.5"/><path d="M6 13h10M6 17h10M6 21h10" stroke="#3d9ad1" stroke-width="1.8"/></svg>
<div class="a" style="left:596px;top:640px;width:60px;height:28px;background:#c6b987;border-radius:2px"></div>
<div class="a mono" style="left:529px;top:640px;font-size:26px;letter-spacing:-1.6px;line-height:30px;white-space:pre;color:#fff">admin<span style="color:#2d2d2d">.log</span> (eccube2123/data/logs)</div>
<svg class="a" style="left:494px;top:674px" width="23" height="28" viewBox="0 0 23 28"><path d="M1.5 1.5h13l6.5 6.5v18.5h-19.5z" fill="#ffffff" stroke="#a9a9a9" stroke-width="3"/><path d="M14.5 1.5v6.5h6.5" fill="none" stroke="#a9a9a9" stroke-width="1.5"/><path d="M6 13h10M6 17h10M6 21h10" stroke="#3d9ad1" stroke-width="1.8"/></svg>
<div class="a mono" style="left:529px;top:678px;font-size:26px;letter-spacing:-1.6px;line-height:30px;white-space:pre;color:#000">customer.log <span style="color:#8a8a8a">(eccube2123/data/logs)</span></div>
<svg class="a" style="left:494px;top:712px" width="23" height="28" viewBox="0 0 23 28"><path d="M1.5 1.5h13l6.5 6.5v18.5h-19.5z" fill="#ffffff" stroke="#a9a9a9" stroke-width="3"/><path d="M14.5 1.5v6.5h6.5" fill="none" stroke="#a9a9a9" stroke-width="1.5"/><path d="M6 13h10M6 17h10M6 21h10" stroke="#3d9ad1" stroke-width="1.8"/></svg>
<div class="a mono" style="left:529px;top:716px;font-size:26px;letter-spacing:-1.6px;line-height:30px;white-space:pre;color:#000">error.log <span style="color:#8a8a8a">(eccube2123/data/logs)</span></div>
<svg class="a" style="left:494px;top:750px" width="23" height="28" viewBox="0 0 23 28"><path d="M1.5 1.5h13l6.5 6.5v18.5h-19.5z" fill="#ffffff" stroke="#a9a9a9" stroke-width="3"/><path d="M14.5 1.5v6.5h6.5" fill="none" stroke="#a9a9a9" stroke-width="1.5"/><path d="M6 13h10M6 17h10M6 21h10" stroke="#3d9ad1" stroke-width="1.8"/></svg>
<div class="a mono" style="left:529px;top:754px;font-size:26px;letter-spacing:-1.6px;line-height:30px;white-space:pre;color:#000">install.log <span style="color:#8a8a8a">(eccube2123/html/install/temp)</span></div>
<svg class="a" style="left:494px;top:788px" width="23" height="28" viewBox="0 0 23 28"><path d="M1.5 1.5h13l6.5 6.5v18.5h-19.5z" fill="#ffffff" stroke="#a9a9a9" stroke-width="3"/><path d="M14.5 1.5v6.5h6.5" fill="none" stroke="#a9a9a9" stroke-width="1.5"/><path d="M6 13h10M6 17h10M6 21h10" stroke="#3d9ad1" stroke-width="1.8"/></svg>
<div class="a mono" style="left:529px;top:792px;font-size:26px;letter-spacing:-1.6px;line-height:30px;white-space:pre;color:#000">site.log <span style="color:#8a8a8a">(eccube2123/data/logs)</span></div>
<div class="a" style="left:475px;top:515px;width:819px;height:309px;box-sizing:border-box;border:1px solid rgba(0,0,0,0.24);border-top-color:rgba(0,0,0,0.16)"></div>
</body></html>
